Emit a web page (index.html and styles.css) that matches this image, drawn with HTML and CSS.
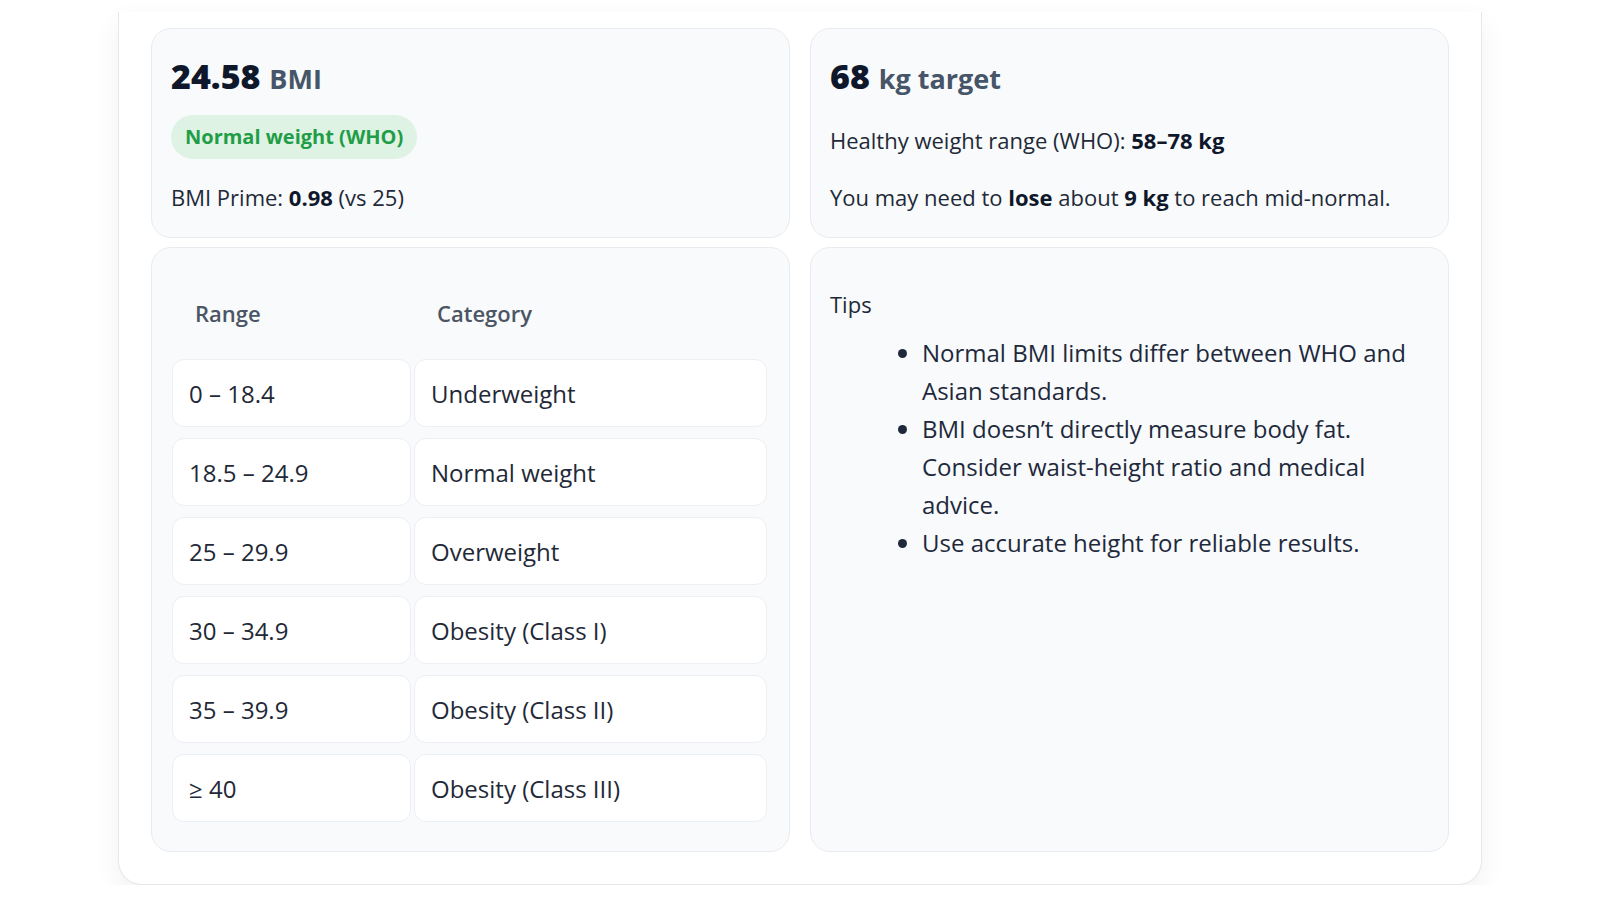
FILE: index.html
```html
<!DOCTYPE html>
<html lang="en">
<head>
<meta charset="utf-8">
<title>BMI result</title>
<link rel="stylesheet" href="styles.css">
</head>
<body>
<main class="panel">
  <section class="summary">
    <article class="card">
      <h2 class="headline"><span class="big">24.58</span> <span class="unit">BMI</span></h2>
      <span class="badge">Normal weight (WHO)</span>
      <p class="line">BMI Prime: <b>0.98</b> (vs 25)</p>
    </article>
    <article class="card">
      <h2 class="headline"><span class="big">68</span> <span class="unit">kg target</span></h2>
      <p class="line first">Healthy weight range (WHO): <b>58–78 kg</b></p>
      <p class="line second">You may need to <b>lose</b> about <b>9 kg</b> to reach mid-normal.</p>
    </article>
  </section>
  <section class="details">
    <article class="card table-card">
      <table class="ranges">
        <thead>
          <tr><th class="col-range">Range</th><th>Category</th></tr>
        </thead>
        <tbody>
          <tr><td>0 – 18.4</td><td>Underweight</td></tr>
          <tr><td>18.5 – 24.9</td><td>Normal weight</td></tr>
          <tr><td>25 – 29.9</td><td>Overweight</td></tr>
          <tr><td>30 – 34.9</td><td>Obesity (Class I)</td></tr>
          <tr><td>35 – 39.9</td><td>Obesity (Class II)</td></tr>
          <tr><td>≥ 40</td><td>Obesity (Class III)</td></tr>
        </tbody>
      </table>
    </article>
    <article class="card tips-card">
      <p class="tips-title">Tips</p>
      <ul class="tips">
        <li>Normal BMI limits differ between WHO and Asian standards.</li>
        <li>BMI doesn’t directly measure body fat. Consider waist-height ratio and medical advice.</li>
        <li>Use accurate height for reliable results.</li>
      </ul>
    </article>
  </section>
</main>
</body>
</html>
```
FILE: styles.css
```css
* { box-sizing: border-box; }

html, body {
  margin: 0;
  background: #ffffff;
}

body {
  font-family: "Open Sans", "Noto Sans", "Liberation Sans", sans-serif;
  color: #1f2937;
  padding-top: 12px;
}

/* outer white panel */
.panel {
  width: 1364px;
  margin: 0 auto;
  padding: 16px 32px 32px;
  background: #ffffff;
  border: 1px solid #e6e8ec;
  border-top: none;
  border-radius: 0 0 24px 24px;
  box-shadow: 0 10px 28px rgba(15, 23, 42, 0.06);
}

.summary,
.details {
  display: grid;
  grid-template-columns: 1fr 1fr;
  column-gap: 20px;
}

.details {
  margin-top: 9px;
}

.card {
  background: #f8fafc;
  border: 1px solid #e8ebef;
  border-radius: 20px;
}

.summary .card {
  display: flex;
  flex-direction: column;
  align-items: flex-start;
  padding: 27px 19px 23px;
}

/* headline: value + unit */
.headline {
  margin: 0;
  font-size: 34px;
  line-height: 41px;
  font-weight: 800;
}

.big {
  font-size: 34px;
  color: #0f172a;
  font-weight: 800;
}

.unit {
  font-size: 27px;
  color: #475569;
  font-weight: 700;
}

.badge {
  display: block;
  margin-top: 16px;
  height: 44px;
  line-height: 44px;
  padding: 0 14px;
  border-radius: 999px;
  background: #dff3e5;
  color: #1f9d47;
  font-size: 20px;
  font-weight: 700;
}

.line {
  margin: 22px 0 0;
  font-size: 22px;
  line-height: 33px;
  color: #1f2937;
}

.line.first {
  margin-top: 25px;
}

.line.second {
  margin-top: 24px;
}

.line b {
  color: #0f172a;
  font-weight: 700;
}

/* ranges table */
.table-card {
  padding: 19px 19px 18px 17px;
}

.ranges {
  width: 100%;
  table-layout: fixed;
  border-collapse: separate;
  border-spacing: 3px 11px;
}

.ranges th {
  height: 70px;
  padding: 0 23px;
  text-align: left;
  font-size: 22px;
  font-weight: 600;
  color: #4b5563;
  vertical-align: middle;
}

.ranges th.col-range {
  width: 239px;
}

.ranges td {
  height: 68px;
  padding: 0 16px;
  background: #ffffff;
  border: 1px solid #eceff3;
  border-radius: 12px;
  font-size: 24px;
  color: #1f2937;
  vertical-align: middle;
}

/* tips */
.tips-card {
  padding: 19px;
}

.tips-title {
  margin: 21px 0 0;
  font-size: 22px;
  line-height: 33px;
  color: #1f2937;
}

.tips {
  margin: 13px 0 0;
  padding-left: 92px;
  font-size: 24px;
  line-height: 38px;
  color: #1e293b;
}
```
